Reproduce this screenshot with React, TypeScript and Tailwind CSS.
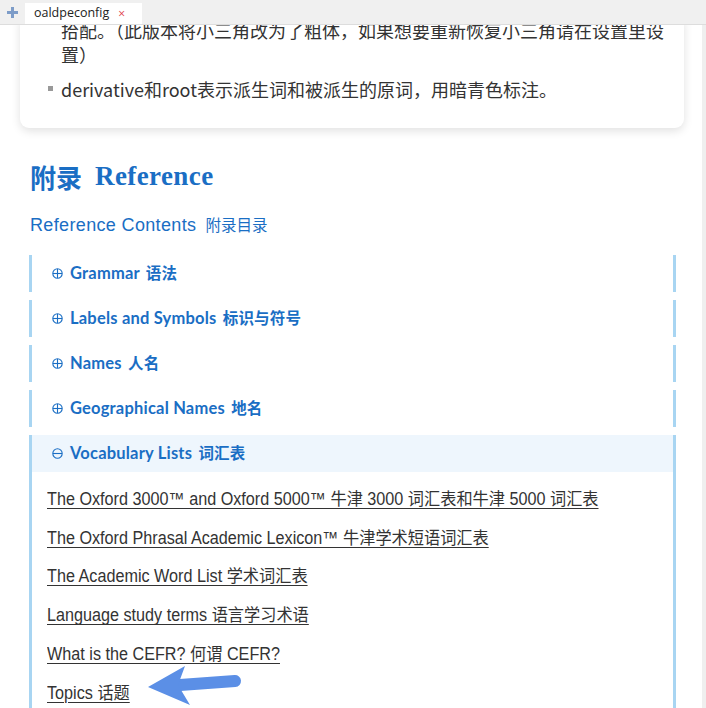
import React from "react";

const CJK = '"Noto Sans CJK SC", sans-serif';

const sections = [
  { en: "Grammar", zh: "语法" },
  { en: "Labels and Symbols", zh: "标识与符号" },
  { en: "Names", zh: "人名" },
  { en: "Geographical Names", zh: "地名" },
];

const vocabLinks = [
  "The Oxford 3000™ and Oxford 5000™ 牛津 3000 词汇表和牛津 5000 词汇表",
  "The Oxford Phrasal Academic Lexicon™ 牛津学术短语词汇表",
  "The Academic Word List 学术词汇表",
  "Language study terms 语言学习术语",
  "What is the CEFR? 何谓 CEFR? ",
  "Topics 话题",
];

function PlusCircle({ minus }: { minus?: boolean }) {
  return (
    <svg width="11" height="11" viewBox="0 0 11 11" className="shrink-0">
      <circle cx="5.5" cy="5.5" r="4.7" fill="none" stroke="#1a6ec4" strokeWidth="1.1" />
      <line x1="1" y1="5.5" x2="10" y2="5.5" stroke="#1a6ec4" strokeWidth="1.1" />
      {!minus && <line x1="5.5" y1="1" x2="5.5" y2="10" stroke="#1a6ec4" strokeWidth="1.1" />}
    </svg>
  );
}

function SectionHeader({ en, zh, open }: { en: string; zh: string; open?: boolean }) {
  return (
    <div
      className={`flex items-center gap-[7px] h-[37px] pl-[20px] ${open ? "bg-[#eef6fd]" : ""}`}
    >
      <PlusCircle minus={open} />
      <span
        className="text-[16.5px] font-bold text-[#1a6ec4] tracking-[0.2px]"
        style={{ fontFamily: `Lato, ${CJK}` }}
      >
        {en} <span className="ml-[2px] text-[15.5px]">{zh}</span>
      </span>
    </div>
  );
}

export default function App() {
  return (
    <div className="w-[706px] h-[708px] overflow-hidden bg-white flex flex-col">
      {/* tab strip */}
      <div className="h-[25px] shrink-0 bg-[#f0f0f0] border-b border-[#dddddd] flex items-end">
        <div className="w-[25px] h-full flex items-center justify-center pt-[1px]">
          <svg width="11" height="11" viewBox="0 0 11 11">
            <rect x="4" y="0" width="3" height="11" fill="#7d9cc8" />
            <rect x="0" y="4" width="11" height="3" fill="#7d9cc8" />
          </svg>
        </div>
        <div
          className="h-[21px] w-[117px] bg-white flex items-center pl-[9px] text-[12.5px] text-[#222]"
          style={{ fontFamily: '"Open Sans", sans-serif' }}
        >
          <span>oaldpeconfig</span>
          <span className="ml-[9px] text-[12px] text-[#e0404a] leading-none">×</span>
        </div>
      </div>

      <div className="flex-1 flex min-h-0">
        <div className="flex-1 overflow-hidden relative">
          {/* notes card, scrolled partly out of view */}
          <div
            className="-mt-[7px] ml-[20px] mr-[18px] rounded-b-[9px] bg-white shadow-[0_3px_10px_rgba(0,0,0,0.12)] pl-[41px] pr-[20px] pb-[27px] text-[18px] leading-[24px] text-[#333]"
            style={{ fontFamily: CJK }}
          >
            <p>拾配。（此版本将小三角改为了粗体，如果想要重新恢复小三角请在设置里设置）</p>
            <div className="relative mt-[11px]">
              <span className="absolute -left-[13px] top-[9px] w-[5px] h-[5px] bg-[#999]" />
              derivative和root表示派生词和被派生的原词，用暗青色标注。
            </div>
          </div>

          {/* reference heading */}
          <h1 className="mt-[30px] ml-[30px] h-[36px] flex items-center text-[#1a6ec4] font-bold">
            <span className="text-[26px]" style={{ fontFamily: CJK }}>附录</span>
            <span
              className="ml-[13px] text-[27px] tracking-[0.4px]"
              style={{ fontFamily: '"Liberation Serif", serif' }}
            >
              Reference
            </span>
          </h1>

          <div className="mt-[19px] ml-[30px] h-[24px] flex items-center text-[#1a6ec4]">
            <span
              className="text-[18px] tracking-[0.35px]"
              style={{ fontFamily: '"Liberation Sans", sans-serif' }}
            >
              Reference Contents
            </span>
            <span className="ml-[9px] text-[15.5px]" style={{ fontFamily: CJK }}>附录目录</span>
          </div>

          {/* accordion */}
          <div className="mt-[18px] ml-[29px] mr-[26px] flex flex-col gap-[8px]">
            {sections.map((s) => (
              <div key={s.en} className="border-x-[3px] border-[#a8d5f2]">
                <SectionHeader en={s.en} zh={s.zh} />
              </div>
            ))}
            <div className="border-x-[3px] border-[#a8d5f2] pb-[20px]">
              <SectionHeader en="Vocabulary Lists" zh="词汇表" open />
              <div className="pl-[15px] pt-[15px] flex flex-col gap-[14.8px]">
                {vocabLinks.map((t) => (
                  <div key={t} className="h-[24px] flex items-center">
                    <a
                      href="#"
                      className="inline-block origin-left scale-x-[0.925] text-[17.5px] text-[#333] underline underline-offset-[3px] decoration-[1px] whitespace-nowrap"
                      style={{ fontFamily: `"Liberation Sans Narrow", "Liberation Sans", ${CJK}` }}
                    >
                      {t}
                    </a>
                  </div>
                ))}
              </div>
            </div>
          </div>

          {/* pointer arrow */}
          <svg
            className="absolute left-[140px] top-[637px]"
            width="110"
            height="50"
            viewBox="0 0 110 50"
          >
            <line x1="95" y1="19" x2="40" y2="23" stroke="#5b8fe6" strokeWidth="12" strokeLinecap="round" />
            <polygon points="8,25 45,4 38,23 50,43" fill="#5b8fe6" />
          </svg>
        </div>
        <div className="w-[4px] shrink-0 bg-[#efefef]" />
      </div>
    </div>
  );
}
